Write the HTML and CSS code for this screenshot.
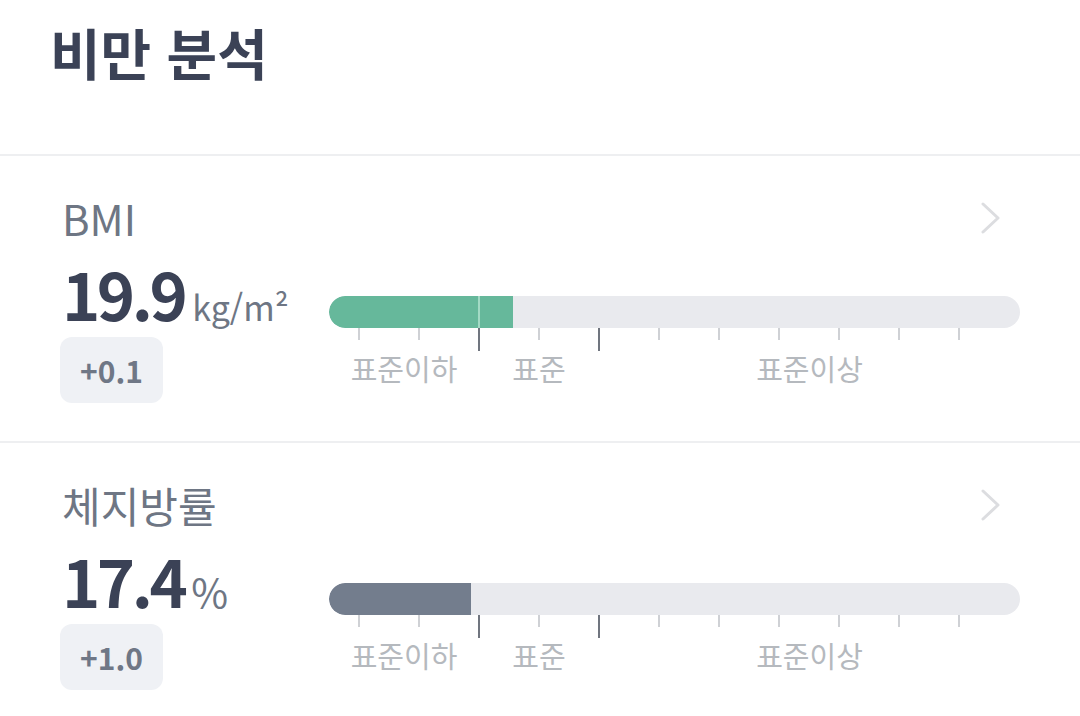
FILE: index.html
```html
<!DOCTYPE html>
<html lang="ko">
<head>
<meta charset="utf-8">
<link rel="stylesheet" href="styles.css">
</head>
<body>
<div class="page">
  <header class="head">
    <h1 class="title">비만 분석</h1>
  </header>

  <section class="metric">
    <div class="metric-top">
      <div class="metric-name">BMI</div>
      <svg class="chev" width="20" height="32" viewBox="0 0 20 32"><polyline points="2,2 17,16 2,30" fill="none" stroke="#dcdde0" stroke-width="3" stroke-linecap="round" stroke-linejoin="round"/></svg>
    </div>
    <div class="metric-body">
      <div class="left">
        <div class="value"><span class="num">19.9</span><span class="unit">kg/m²</span></div>
        <div class="badge">+0.1</div>
      </div>
      <div class="scale">
        <div class="bar">
          <div class="fill green" style="width:184px"></div>
          <div class="marker"></div>
        </div>
        <div class="ticks">
          <span class="tick"></span><span class="tick"></span><span class="tick major"></span><span class="tick"></span><span class="tick major"></span><span class="tick"></span><span class="tick"></span><span class="tick"></span><span class="tick"></span><span class="tick"></span><span class="tick"></span>
        </div>
        <div class="labels">
          <span>표준이하</span><span>표준</span><span>표준이상</span>
        </div>
      </div>
    </div>
  </section>

  <section class="metric">
    <div class="metric-top">
      <div class="metric-name">체지방률</div>
      <svg class="chev" width="20" height="32" viewBox="0 0 20 32"><polyline points="2,2 17,16 2,30" fill="none" stroke="#dcdde0" stroke-width="3" stroke-linecap="round" stroke-linejoin="round"/></svg>
    </div>
    <div class="metric-body">
      <div class="left">
        <div class="value"><span class="num">17.4</span><span class="unit pct">%</span></div>
        <div class="badge">+1.0</div>
      </div>
      <div class="scale">
        <div class="bar">
          <div class="fill gray" style="width:142px"></div>
        </div>
        <div class="ticks">
          <span class="tick"></span><span class="tick"></span><span class="tick major"></span><span class="tick"></span><span class="tick major"></span><span class="tick"></span><span class="tick"></span><span class="tick"></span><span class="tick"></span><span class="tick"></span><span class="tick"></span>
        </div>
        <div class="labels">
          <span>표준이하</span><span>표준</span><span>표준이상</span>
        </div>
      </div>
    </div>
  </section>
</div>
</body>
</html>
```

FILE: styles.css
```css
html, body {
  margin: 0;
  padding: 0;
  background: #ffffff;
}
body {
  font-family: "Noto Sans CJK KR", "Noto Sans", sans-serif;
  width: 1080px;
  height: 716px;
  overflow: hidden;
}
.head {
  height: 156px;
  box-sizing: border-box;
  padding: 16px 0 0 50px;
  border-bottom: 2px solid #eeeff1;
}
.title {
  margin: 0;
  font-size: 55px;
  line-height: 70px;
  font-weight: 700;
  color: #3b4256;
}
.metric {
  height: 287px;
  box-sizing: border-box;
  border-bottom: 2px solid #eeeff1;
  padding: 37px 60px 0 62px;
}
.metric-top {
  display: flex;
  justify-content: space-between;
  align-items: flex-start;
}
.metric-name {
  font-size: 42px;
  line-height: 50px;
  color: #6e7684;
}
.chev {
  margin: 9px 19px 0 0;
}
.metric-body {
  display: flex;
  margin-top: 12px;
}
.left {
  width: 267px;
  flex: none;
}
.value {
  display: flex;
  align-items: baseline;
  color: #3b4256;
  height: 76px;
}
.num {
  font-size: 65px;
  line-height: 76px;
  font-weight: 700;
  letter-spacing: -3.5px;
}
.unit {
  font-size: 34px;
  color: #6e7684;
  margin-left: 8px;
}
.unit.pct {
  font-size: 40px;
  margin-left: 7px;
}
.badge {
  display: inline-block;
  margin-top: 6px;
  margin-left: -2px;
  width: 103px;
  height: 66px;
  line-height: 66px;
  text-align: center;
  border-radius: 12px;
  background: #eff1f5;
  color: #6f7786;
  font-size: 30px;
  font-weight: 700;
}
.scale {
  flex: 1;
  padding-top: 41px;
}
.bar {
  position: relative;
  height: 32px;
  border-radius: 16px;
  background: #e9eaee;
  overflow: hidden;
}
.fill {
  height: 100%;
  border-radius: 16px 0 0 16px;
}
.fill.green { background: #66b89b; }
.fill.gray { background: #737d8d; }
.marker {
  position: absolute;
  left: 149px;
  top: 0;
  width: 2px;
  height: 100%;
  background: #a3dac5;
}
.ticks {
  display: flex;
  height: 23px;
}
.tick {
  width: 60px;
  flex: none;
  position: relative;
}
.tick::before {
  content: "";
  position: absolute;
  left: 29px;
  top: 0;
  width: 2px;
  height: 12px;
  background: #cfd1d5;
}
.tick.major::before {
  height: 23px;
  background: #70757f;
}
.labels {
  display: grid;
  grid-template-columns: 150px 120px 1fr;
  text-align: center;
  font-size: 29px;
  line-height: 34px;
  color: #b5b9be;
}
```
